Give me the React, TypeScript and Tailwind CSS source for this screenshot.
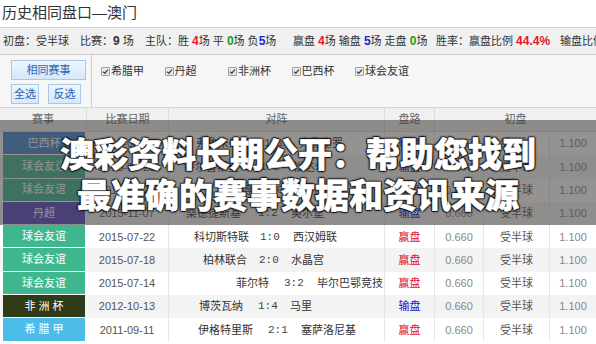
import React from 'react'

type Row = {
  league: string
  color: string
  date: string
  home: string
  score: string
  away: string
  win: boolean
  // [home text right edge, score left edge, away text left edge] in px from page left
  pos: [number, number, number]
}

const rows: Row[] = [
  { league: '巴西杯', color: '#4687cf', date: '2016-04-28', home: '弗鲁米嫩塞', score: '1:1', away: '克鲁塞罗', win: false, pos: [250, 263, 298] },
  { league: '球会友谊', color: '#3fb78e', date: '2016-02-25', home: '萨尔普斯堡', score: '1:3', away: '松达尔', win: false, pos: [238, 259, 292] },
  { league: '球会友谊', color: '#3fb78e', date: '2016-01-21', home: '罗森博格', score: '0:2', away: '莫尔德', win: false, pos: [262, 276, 298] },
  { league: '丹超', color: '#5c49c2', date: '2015-11-07', home: '桑德捷斯基', score: '1:2', away: '奥尔堡', win: false, pos: [240, 257, 290] },
  { league: '球会友谊', color: '#3fb78e', date: '2015-07-22', home: '科切斯特联', score: '1:0', away: '西汉姆联', win: true, pos: [248, 259, 292] },
  { league: '球会友谊', color: '#3fb78e', date: '2015-07-18', home: '柏林联合', score: '2:0', away: '水晶宫', win: true, pos: [246, 258, 290] },
  { league: '球会友谊', color: '#3fb78e', date: '2015-07-14', home: '菲尔特', score: '3:2', away: '毕尔巴鄂竞技', win: true, pos: [268, 283, 316] },
  { league: '非 洲 杯', color: '#2e3b16', date: '2012-10-13', home: '博茨瓦纳', score: '1:4', away: '马里', win: false, pos: [242, 257, 289] },
  { league: '希 腊 甲', color: '#4cbde9', date: '2011-09-11', home: '伊格特里斯', score: '2:1', away: '塞萨洛尼基', win: true, pos: [252, 267, 300] },
]

const leagues = ['希腊甲', '丹超', '非洲杯', '巴西杯', '球会友谊']

function Check() {
  return (
    <span className="flex size-[9px] shrink-0 items-center justify-center rounded-[1px] border border-[#a0a0a0] bg-[#e8e8e8]">
      <svg viewBox="0 0 8 8" className="size-[7px]">
        <path d="M1.2 4.2 L3.2 6 L6.8 1.8" fill="none" stroke="#444" strokeWidth="1.4" />
      </svg>
    </span>
  )
}

function Btn({ label, className }: { label: string; className: string }) {
  return (
    <div
      className={`flex items-center justify-center border border-[#a8c8ea] bg-gradient-to-b from-[#eef6fe] to-[#d6e8fa] text-[11px] text-[#2a62b0] ${className}`}
    >
      {label}
    </div>
  )
}

const shadow =
  'text-[34px] font-black leading-[41px] text-white [-webkit-text-stroke:0.5px_#fff] [text-shadow:1px_0_0_#1c1c1c,-1px_0_0_#1c1c1c,0_1px_0_#1c1c1c,0_-1px_0_#1c1c1c,1px_1px_1px_#1c1c1c,-1px_-1px_1px_#1c1c1c,1px_-1px_1px_#1c1c1c,-1px_1px_1px_#1c1c1c,0_0_3px_#000]'

export default function App() {
  return (
    <div
      className="relative h-[344px] w-[596px] overflow-hidden bg-white text-[#333]"
      style={{ fontFamily: '"Liberation Sans", "Noto Sans CJK SC", sans-serif' }}
    >
      {/* Title */}
      <div className="flex h-[27px] items-center pl-[2px] text-[15px] text-[#333]">历史相同盘口—澳门</div>

      {/* Stats bar */}
      <div className="flex h-[28px] items-center overflow-hidden whitespace-nowrap border-y border-[#cfcfcf] bg-[#f0f0f0] pl-[3px] text-[11px] text-[#333] [&_b]:text-[12px]">
        <span className="w-[77px] shrink-0">初盘：受半球</span>
        <span className="w-[65px] shrink-0">
          比赛：<b>9</b> 场
        </span>
        <span className="w-[148px] shrink-0">
          主队：胜 <b className="text-[#e5162a]">4</b>场 平 <b className="text-[#1a9a1a]">0</b>场 负<b className="text-[#2323c8]">5</b>场
        </span>
        <span className="w-[143px] shrink-0">
          赢盘 <b className="text-[#e5162a]">4</b>场 输盘 <b className="text-[#2323c8]">5</b>场 走盘 <b className="text-[#1a9a1a]">0</b>场
        </span>
        <span className="w-[124px] shrink-0">
          胜率：赢盘比例 <b className="text-[#e5162a]">44.4%</b>
        </span>
        <span className="shrink-0">
          输盘比例 <b className="text-[#2323c8]">55.6%</b>
        </span>
      </div>

      {/* Filter area */}
      <div className="flex h-[53px] border-b border-[#d6d6d6] bg-[#f6f6f6]">
        <div className="flex w-[92px] flex-col gap-[4px] border-r border-[#d0d0d0] pl-[11px] pt-[5px] pb-[3px]">
          <Btn label="相同赛事" className="h-[20px] w-[75px]" />
          <div className="flex gap-[9px]">
            <Btn label="全选" className="h-[20px] w-[28px]" />
            <Btn label="反选" className="h-[20px] w-[33px]" />
          </div>
        </div>
        <div className="flex h-[32px] items-center pl-[9px]">
          {leagues.map((l) => (
            <div key={l} className="flex w-[63.5px] items-center gap-[1px] text-[11px] text-[#333]">
              <Check />
              <span>{l}</span>
            </div>
          ))}
        </div>
      </div>

      {/* Table header */}
      <div className="grid h-[24px] grid-cols-[86px_82px_216px_50px_162px] border-b border-[#dedede] bg-[#f0f0f0] text-[11px] text-[#666]">
        {['赛事', '比赛日期', '对阵', '盘路', '初盘'].map((h, i) => (
          <div key={h} className={`flex items-center justify-center ${i > 0 ? 'border-l border-[#dcdcdc]' : ''}`}>
            {h}
          </div>
        ))}
      </div>

      {/* Rows */}
      {rows.map((r, i) => (
        <div
          key={i}
          className={`grid h-[23.3px] grid-cols-[86px_82px_216px_50px_49px_66px_47px] text-[11px] ${i % 2 ? 'bg-[#f3f3f3]' : 'bg-white'}`}
        >
          <div className="pb-px pl-[3px] pr-px">
            <div className="flex h-full items-center justify-center text-white" style={{ background: r.color }}>
              {r.league}
            </div>
          </div>
          <div className="flex items-center justify-center text-[#555]">{r.date}</div>
          <div className="flex items-center border-l border-[#e6e6e6] text-[#333]">
            <span className="text-right" style={{ width: r.pos[0] - 168 }}>
              {r.home}
            </span>
            <span
              className="text-[#444]"
              style={{ marginLeft: r.pos[1] - r.pos[0], width: r.pos[2] - r.pos[1], fontFamily: '"Liberation Mono", monospace' }}
            >
              {r.score}
            </span>
            <span className="whitespace-nowrap">{r.away}</span>
          </div>
          <div className={`flex items-center justify-center border-l border-[#e6e6e6] ${r.win ? 'text-[#e0101c]' : 'text-[#1515d0]'}`}>
            {r.win ? '赢盘' : '输盘'}
          </div>
          <div className="flex items-center justify-center border-l border-[#e6e6e6] text-[#888]">0.660</div>
          <div className="flex items-center justify-center border-l border-[#e6e6e6] text-[#555]">受半球</div>
          <div className="flex items-center justify-center border-l border-[#e6e6e6] text-[#888]">1.100</div>
        </div>
      ))}

      {/* Overlay banner */}
      <div className="absolute left-0 right-0 top-[120px] flex h-[105px] flex-col items-center justify-center bg-[rgba(62,56,56,0.55)]">
        <div className={shadow} style={{ fontFamily: '"Noto Sans CJK SC", sans-serif' }}>
          澳彩资料长期公开：帮助您找到
        </div>
        <div className={shadow} style={{ fontFamily: '"Noto Sans CJK SC", sans-serif' }}>
          最准确的赛事数据和资讯来源
        </div>
      </div>
    </div>
  )
}
